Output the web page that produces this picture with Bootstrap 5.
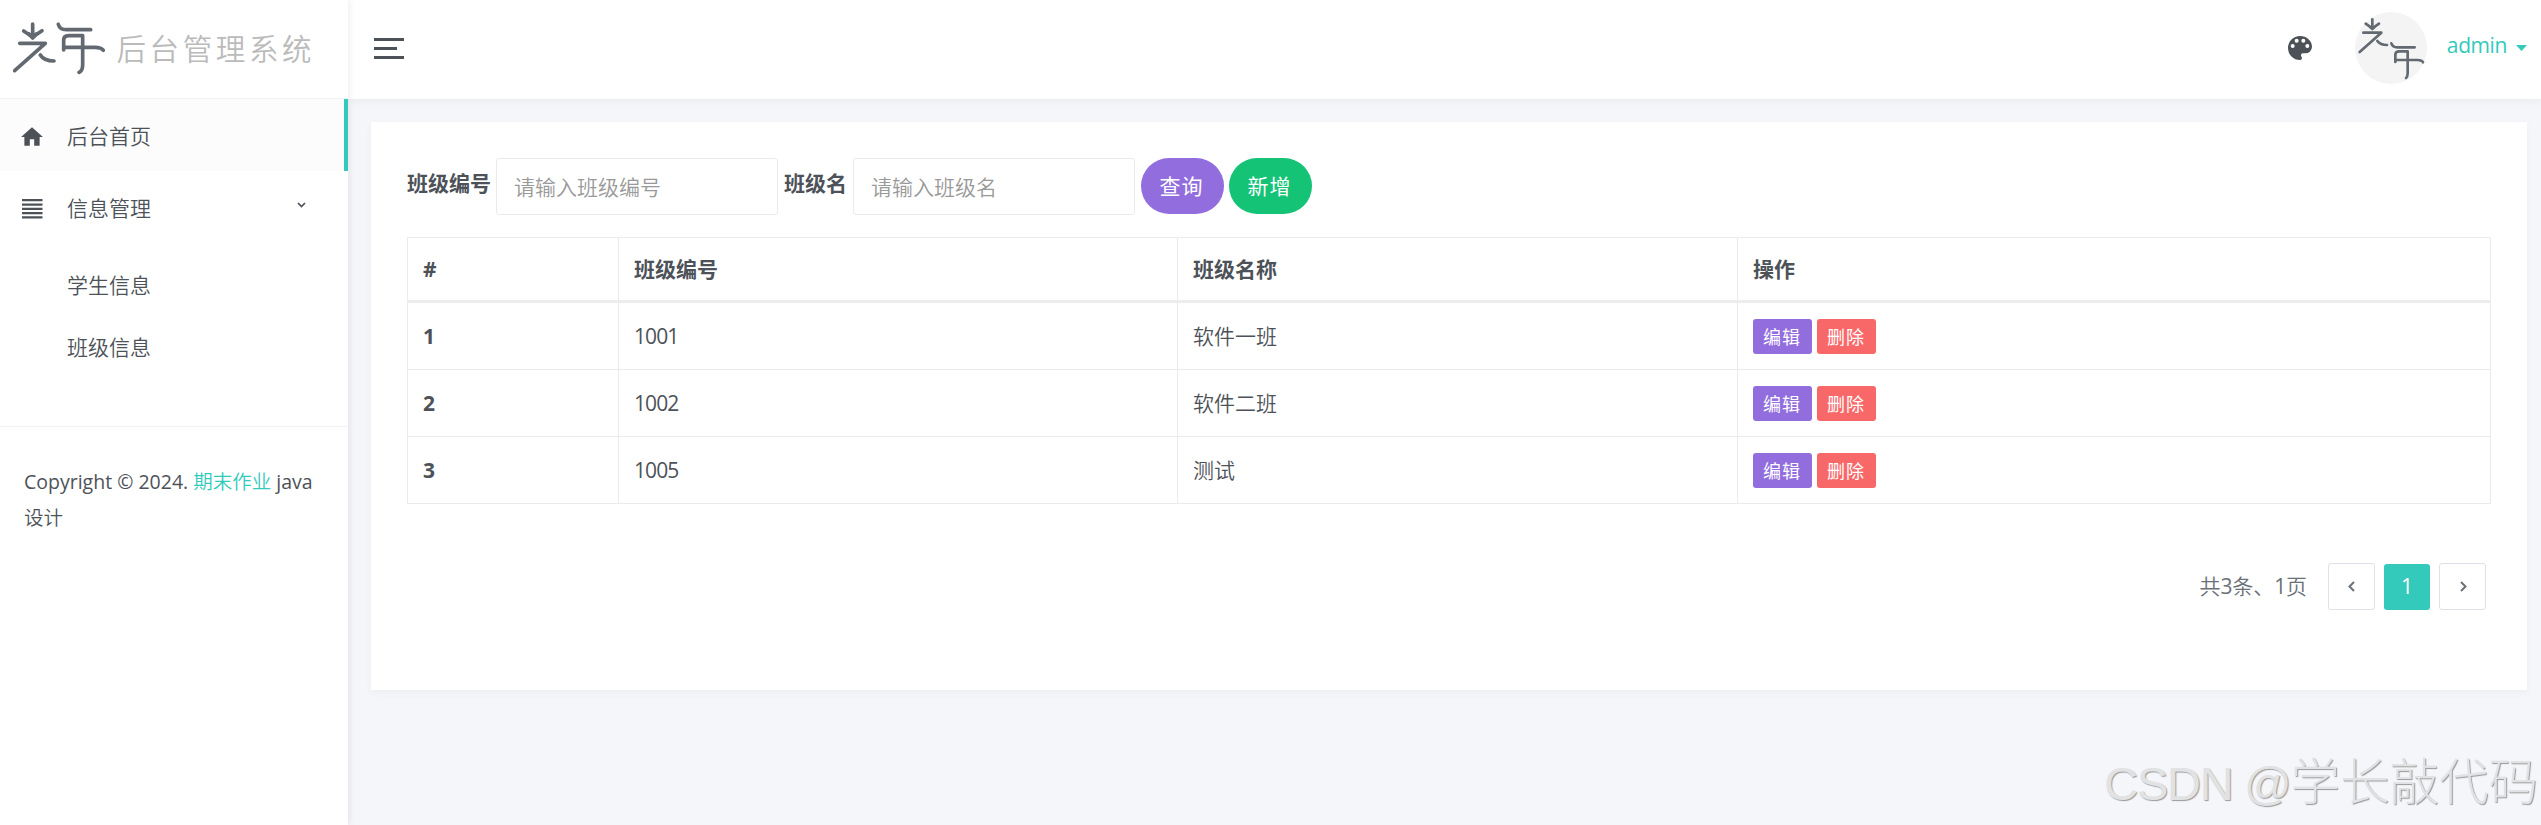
<!DOCTYPE html>
<html lang="zh-CN">
<head>
<meta charset="utf-8">
<meta name="viewport" content="width=device-width, initial-scale=1">
<title>后台管理系统</title>
<link href="https://cdn.jsdelivr.net/npm/bootstrap@5.3.0/dist/css/bootstrap.min.css" rel="stylesheet">
<style>
:root{--teal:#33cabb;--ink:#4d5259;--line:#ebebeb}
body{font-family:"Open Sans","Noto Sans CJK SC",sans-serif;font-size:21px;font-weight:350;line-height:31.5px;color:var(--ink);background:#f5f6fa;height:825px;overflow:hidden}
a{text-decoration:none}
.side-nav{width:348px;height:825px;background:#fff;box-shadow:0 0 8px rgba(0,0,0,.1);z-index:3}
.brand{height:99px;padding:0 12.5px 2px;box-shadow:inset 0 -1px 0 #f3f3f3}
.brand-text{font-size:29.5px;letter-spacing:3.6px;color:#bbb;line-height:44px;white-space:nowrap}
.side-link{height:72px;padding:3px 20px 0;color:var(--ink)}
.side-link.active{background:#fcfcfc;border-right:4px solid var(--teal)}
.side-link svg{width:24px;height:24px;margin-right:23px}
.sub-menu{padding:11px 0 48px}
.sub-menu a{display:block;height:62px;line-height:62px;padding-left:67px;color:var(--ink)}
.side-foot{border-top:1px solid #f3f3f3;padding:37px 24px;font-size:19.5px;line-height:36px}
.side-foot .latin{font-weight:500}
.side-foot a,.user-link{color:var(--teal)}
.top-bar{height:99px;background:#fff;box-shadow:0 2px 8px rgba(0,0,0,.05);padding:0 14px 3px 26px}
.burger{width:30px;gap:6px;margin-top:1px}
.burger i{height:3px;background:var(--ink)}
.avatar{margin-left:39px}
.user-link{margin-left:20px;gap:9px;font-weight:400}
.user-name{position:relative;top:-2px;letter-spacing:-.4px}
.caret{width:11px;height:6px;flex-shrink:0;background:var(--teal);clip-path:polygon(0 0,100% 0,50% 100%)}
.panel{margin:23px 14px 0 23px;height:568px;border:0;border-radius:0;box-shadow:0 3px 8px rgba(0,0,0,.04)}
.panel .card-body{padding:36px}
.search-bar label{font-weight:700;position:relative;top:-3px}
.search-bar .form-control{width:282px;height:57px;font-size:21px;font-weight:350;border-color:var(--line);border-radius:3px;padding:0 17px}
.first{margin:0 6px 0 5px}
.second{margin:0 6px}
.form-control::placeholder{color:#999}
.btn-round{width:83px;height:56px;border-radius:28px;font-size:21px;padding:1px 2px 0 0;margin-bottom:1px;letter-spacing:1px}
.btn-round.green{margin-left:5px}
.btn-mini{width:59px;height:35px;border-radius:3px;font-size:18px;line-height:36px;padding:0 1px 0 0;letter-spacing:1px}
.ops{gap:5px;margin-top:-2px}
.purple,.purple:hover{background:#926dde;color:#fff;border:0}
.green,.green:hover{background:#15c377;color:#fff;border:0}
.red,.red:hover{background:#f96868;color:#fff;border:0}
.data-table{table-layout:fixed;width:2084px;margin:22px 0 0;--bs-table-color:var(--ink);--bs-table-bg:#fff;border-color:var(--line);border-collapse:collapse}
.data-table th,.data-table td{padding:2px 15px 0;height:67px;vertical-align:middle;border:1px solid var(--line)}
.data-table>thead th{height:64px;padding-top:1px;border-bottom:3px solid #ebedef}
.data-table>tbody>tr:first-child>*{height:68px}
.data-table .num{letter-spacing:-.9px;font-weight:400}
.pager{margin-top:59px;padding-right:5px;color:#6b7178;gap:9px}
.pager i{font-style:normal;font-weight:400;letter-spacing:-.3px}
.pager .page-link{width:47px;height:47px;padding:0;border:1px solid #dfe1e6;border-radius:3px;color:#6b7178;display:flex;align-items:center;justify-content:center;font-size:21px;font-weight:400}
.pager .page-link.now{background:var(--teal);border:0;color:#fff;width:46px;height:46px}
.watermark{position:absolute;right:3px;bottom:4px;font-family:"Liberation Sans","Noto Sans CJK SC",sans-serif;font-size:49.5px;font-weight:300;line-height:74px;color:#e1e2e3;text-shadow:1px 1px 1px #999;white-space:nowrap;z-index:5}
.watermark span{letter-spacing:-1.3px;font-size:47px}
</style>
</head>
<body class="d-flex position-relative">
<aside class="side-nav flex-shrink-0 position-relative">
  <div class="brand d-flex align-items-center">
    <svg width="92" height="53" viewBox="38 64 276 159" fill="none" stroke="#626970" stroke-width="11" stroke-linecap="round" stroke-linejoin="round">
      <path d="M97 70v35M70 91l27 18 28-19"/><path d="M86 100l11 12 11-12"/>
      <path d="M58 128h77L43 210M120 163q11 18 41 18"/>
      <path d="M174 71q4 16 24 16h73M190 148v-30q0-13 15-13h42v87q0 18-11 23M190 140h93q20 0 26 9"/>
    </svg>
    <span class="brand-text ms-2 ps-1">后台管理系统</span>
  </div>
  <nav>
    <a href="#" class="side-link active d-flex align-items-center">
      <svg viewBox="1 1 22 22" fill="#4d5259"><path d="M10 20v-6h4v6h5v-8h3L12 3 2 12h3v8z"/></svg>后台首页</a>
    <a href="#" class="side-link d-flex align-items-center">
      <svg viewBox="0 0 24 24" fill="#4d5259"><path d="M2 2h20.500v2.300H2zM2 6.400h20.500v2.300H2zM2 10.700h20.500V13H2zM2 15h20.500v2.300H2zM2 19.300h20.500v2.300H2z"/></svg>信息管理
      <svg class="chevron ms-auto me-3" viewBox="0 0 24 24" fill="none" stroke="#4d5259" stroke-width="1.700"><path d="M10 6l3.500 3.500L17 6"/></svg></a>
    <div class="sub-menu"><a href="#">学生信息</a><a href="#">班级信息</a></div>
  </nav>
  <div class="side-foot"><span class="latin">Copyright © 2024.</span> <a href="#">期末作业</a> <span class="latin">java</span><br>设计</div>
</aside>
<div class="flex-grow-1">
  <header class="top-bar d-flex align-items-center">
    <div class="burger d-flex flex-column"><i></i><i class="w-75"></i><i></i></div>
    <svg class="ms-auto" width="32" height="32" viewBox="0 0 24 24" fill="#4d5259"><path d="M12 3a9 9 0 0 0 0 18 1.500 1.500 0 0 0 1.100-2.500 1.500 1.500 0 0 1 1.100-2.500H16a5 5 0 0 0 5-5c0-4.400-4-8-9-8zm-5.500 9a1.500 1.500 0 1 1 0-3 1.500 1.500 0 0 1 0 3zm3-4a1.500 1.500 0 1 1 0-3 1.500 1.500 0 0 1 0 3zm5 0a1.500 1.500 0 1 1 0-3 1.500 1.500 0 0 1 0 3zm3 4a1.500 1.500 0 1 1 0-3 1.500 1.500 0 0 1 0 3z"/></svg>
    <svg class="avatar" width="72" height="72" viewBox="345 36 216 216" fill="none" stroke="#626970" stroke-width="8" stroke-linecap="round" stroke-linejoin="round">
      <circle cx="453" cy="144" r="108" fill="#f4f4f4" stroke="none"/>
      <path d="M397 58v26M377 71l20 14 20-14M389 80l8 7 8-7M370 98h54l-65 58M412 123q9 12 29 12M454 130q4 12 18 12h52M466 186v-22q0-10 12-10h25v66q0 10-5 14M466 180h66q14 0 17 7"/>
    </svg>
    <a href="#" class="user-link d-flex align-items-center"><span class="user-name">admin</span><span class="caret"></span></a>
  </header>
  <main class="card panel">
    <div class="card-body">
      <form class="search-bar d-flex align-items-center">
        <label>班级编号</label><input class="form-control first" placeholder="请输入班级编号">
        <label>班级名</label><input class="form-control second" placeholder="请输入班级名">
        <button type="button" class="btn btn-round purple">查询</button><button type="button" class="btn btn-round green">新增</button>
      </form>
      <table class="table data-table">
        <colgroup><col style="width:211px"><col style="width:559px"><col style="width:560px"><col></colgroup>
        <thead><tr><th>#</th><th>班级编号</th><th>班级名称</th><th>操作</th></tr></thead>
        <tbody>
          <tr><th>1</th><td class="num">1001</td><td>软件一班</td><td><div class="d-flex ops"><button class="btn btn-mini purple">编辑</button><button class="btn btn-mini red">删除</button></div></td></tr>
          <tr><th>2</th><td class="num">1002</td><td>软件二班</td><td><div class="d-flex ops"><button class="btn btn-mini purple">编辑</button><button class="btn btn-mini red">删除</button></div></td></tr>
          <tr><th>3</th><td class="num">1005</td><td>测试</td><td><div class="d-flex ops"><button class="btn btn-mini purple">编辑</button><button class="btn btn-mini red">删除</button></div></td></tr>
        </tbody>
      </table>
      <div class="pager d-flex justify-content-end align-items-center">
        <span class="me-2 pe-1">共<i>3</i>条、<i>1</i>页</span>
        <a href="#" class="page-link"><svg width="24" height="24" viewBox="0 0 24 24" fill="none" stroke="#6b7178" stroke-width="2"><path d="M14 7l-4.500 4.500L14 16"/></svg></a>
        <a href="#" class="page-link now">1</a>
        <a href="#" class="page-link"><svg width="24" height="24" viewBox="0 0 24 24" fill="none" stroke="#6b7178" stroke-width="2"><path d="M10 7l4.500 4.500L10 16"/></svg></a>
      </div>
    </div>
  </main>
</div>
<div class="watermark"><span>CSDN @</span>学长敲代码</div>
<script src="https://cdn.jsdelivr.net/npm/bootstrap@5.3.0/dist/js/bootstrap.bundle.min.js"></script>
</body>
</html>
